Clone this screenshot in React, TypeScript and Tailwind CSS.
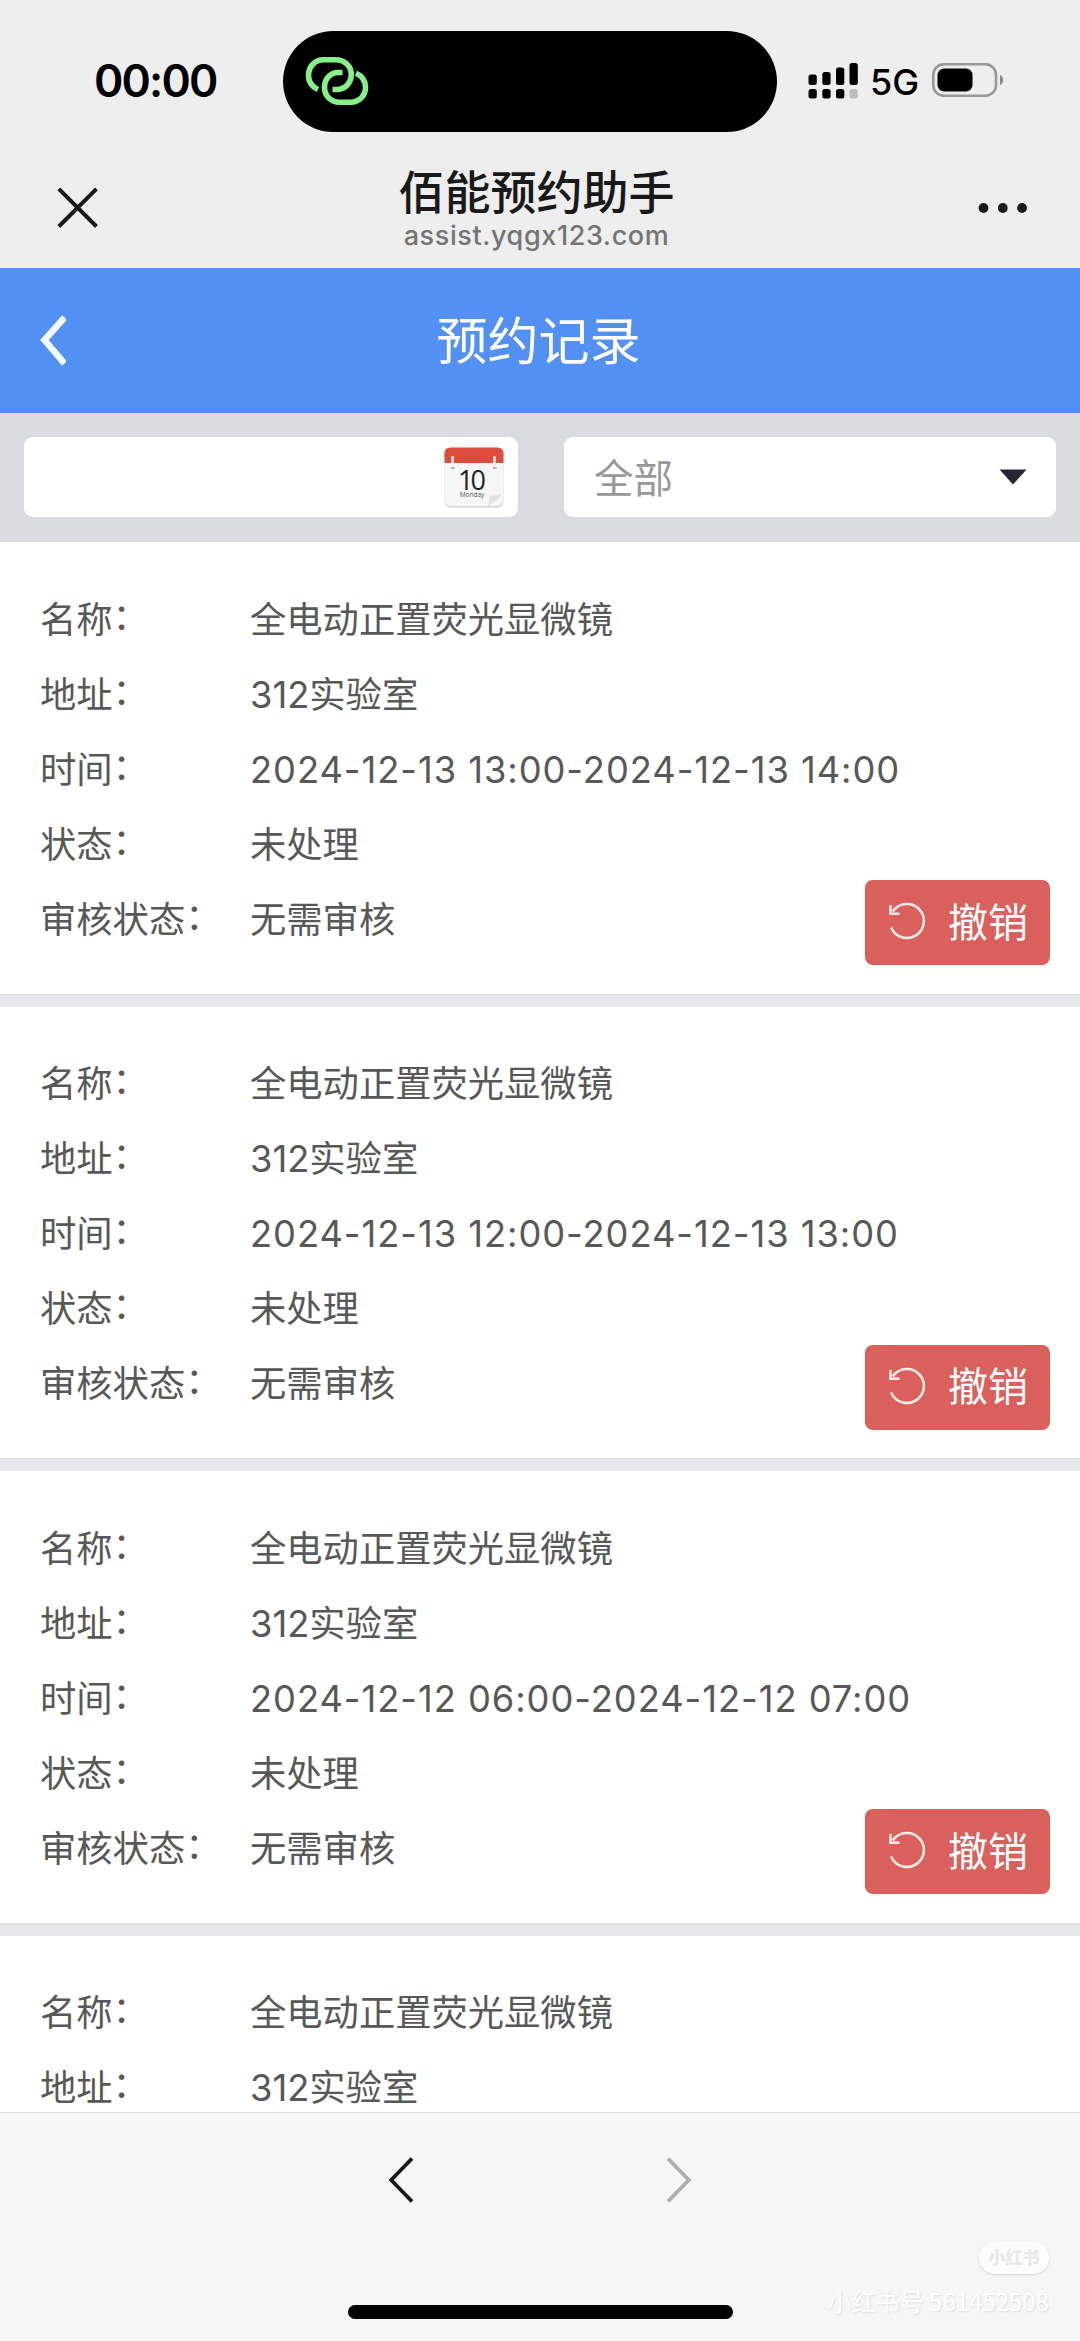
import React from 'react';

const records = [
  { id: 1, time: '2024-12-13 13:00-2024-12-13 14:00' },
  { id: 2, time: '2024-12-13 12:00-2024-12-13 13:00' },
  { id: 3, time: '2024-12-12 06:00-2024-12-12 07:00' },
  { id: 4 },
];

function StatusBar() {
  return (
    <div className="flex h-[162px] shrink-0 items-center">
      <div className="w-[283px] pl-[94px] text-[44.500px] leading-none font-semibold tracking-[-1.800px] text-black">00:00</div>
      <div className="flex h-[101px] w-[494px] items-center rounded-full bg-black pl-[21px]">
        {/* Personal hotspot links */}
        <svg width="66" height="52" viewBox="0 0 66 52" fill="none" stroke="#86f089" strokeWidth="5.6">
          <path d="M14 34.500C7.500 31.500 4.500 26.500 4.500 20.500C4.500 11.500 11 4.800 19.500 4.800H31.500C40.500 4.800 47.300 11 47.300 19.500C47.300 28 41 34.500 32.500 34.500H28.500" />
          <path d="M38.500 17.500H34.500C26 17.500 20.500 24 20.500 32.500C20.500 41 27 47.200 35.500 47.200H46.500C55 47.200 61.500 41 61.500 32.500C61.500 26 58 20.800 52 18.200" />
        </svg>
      </div>
      <svg className="ml-[31px]" width="52" height="38" viewBox="0 0 52 38" fill="#000">
        <rect x="0.500" y="12.500" width="8.300" height="10.500" rx="2.500" />
        <rect x="14.300" y="10" width="8.300" height="13" rx="2.500" />
        <rect x="28" y="5.500" width="8.300" height="17.500" rx="2.500" />
        <rect x="41.500" y="1" width="8.300" height="22" rx="2.500" />
        <rect x="0.500" y="27" width="8.300" height="9.500" rx="2.500" />
        <rect x="14.300" y="27" width="8.300" height="9.500" rx="2.500" />
        <rect x="28" y="27" width="8.300" height="9.500" rx="2.500" />
        <rect x="41.500" y="27" width="8.300" height="9.500" rx="2.500" fill="#bdbdbd" />
      </svg>
      <div className="ml-[10px] pt-px text-[36px] leading-none font-medium text-black">5G</div>
      <svg className="-mt-[2px] ml-3" width="74" height="36" viewBox="0 0 74 36">
        <rect x="2.300" y="2.300" width="62.700" height="31.400" rx="10.500" fill="none" stroke="#989898" strokeWidth="2.600" />
        <rect x="6.500" y="6.500" width="35" height="23" rx="6.500" fill="#000" />
        <path d="M69 13C73.300 14.800 73.300 21.200 69 23Z" fill="#8b8b8b" />
      </svg>
    </div>
  );
}

function BrowserBar() {
  return (
    <div className="flex h-[106px] shrink-0 items-start justify-between pr-[52px] pl-[57px]">
      <svg className="mt-[25px]" width="42" height="42" viewBox="0 0 42 42" stroke="#191919" strokeWidth="4">
        <path d="M1.800 1.800L39.500 39.500M39.500 1.800L1.800 39.500" />
      </svg>
      <div className="mr-1 flex flex-col items-center">
        <div className="text-[46px] leading-[60px] font-medium text-[#191919]">佰能预约助手</div>
        <div className="text-[27px] leading-[27px] font-medium tracking-[0.600px] text-[#757575]">assist.yqgx123.com</div>
      </div>
      <svg className="mt-[40px]" width="50" height="12" viewBox="0 0 50 12" fill="#191919">
        <circle cx="5.500" cy="6" r="4.900" />
        <circle cx="24.800" cy="6" r="4.900" />
        <circle cx="44" cy="6" r="4.900" />
      </svg>
    </div>
  );
}

function PageHeader() {
  return (
    <div className="flex h-[145px] shrink-0 items-center bg-[#5290f3] px-10 text-white">
      <svg width="26" height="51" viewBox="0 0 26 51" fill="none" stroke="#f3faff" strokeWidth="6.500">
        <path d="M24.500 2.500L4.500 25L24.500 48.500" />
      </svg>
      <h1 className="flex-1 pt-[2px] pr-[29px] text-center text-[51px] leading-none font-normal">预约记录</h1>
    </div>
  );
}

function CalendarIcon() {
  return (
    <svg width="60" height="61" viewBox="0 0 60 61">
      <rect x="0.500" y="1.500" width="59" height="59" rx="6" fill="#d3d4d5" />
      <rect x="0.500" y="0.500" width="59" height="58.500" rx="6" fill="#f5f6f6" />
      <path d="M0.500 16V6.500Q0.500 0.500 6.500 0.500H53.500Q59.500 0.500 59.500 6.500V16Z" fill="#dc4c3c" />
      <path d="M8.500 9V18M50.500 9V18" stroke="#f6e9e8" strokeWidth="2.500" />
      <path d="M7 21H10.500M49 21H52.500" stroke="#999" strokeWidth="1.500" />
      <path d="M44 58.500C45.500 54 44.500 51 46 49C49 48 54 49.500 57.500 46C56 51 50 56.500 44 58.500Z" fill="#e1e2e3" />
      <text x="26.500" y="43" textAnchor="middle" fontFamily="Open Sans, sans-serif" fontSize="27" letterSpacing="-3" fill="#222">10</text>
      <text x="28" y="50" textAnchor="middle" fontFamily="Open Sans, sans-serif" fontSize="6.500" fill="#555">Monday</text>
    </svg>
  );
}

function Filters() {
  return (
    <div className="flex h-[129px] shrink-0 gap-[46px] bg-[#d9dbde] px-6 pt-6">
      <div className="flex h-[80px] w-[494px] items-center justify-end rounded-[9px] bg-white pr-[14px]">
        <CalendarIcon />
      </div>
      <div className="flex h-[80px] flex-1 items-center justify-between rounded-[9px] bg-white pr-[29px] pl-[30px]">
        <span className="pt-[5px] text-[39.500px] leading-none text-[#999]">全部</span>
        <svg width="28" height="16" viewBox="0 0 28 16" fill="#252535">
          <path d="M0.500 0.500H27.500L14 15.500Z" />
        </svg>
      </div>
    </div>
  );
}

function Row({ label, value, wide }: { label: string; value: string; wide?: boolean }) {
  return (
    <div className="flex h-[75px] items-center whitespace-nowrap">
      <dt className="w-[210px] shrink-0">
        {label}
        <span className="relative -top-[3px]">：</span>
      </dt>
      <dd className={wide ? 'tracking-[0.950px]' : ''}>{value}</dd>
    </div>
  );
}

function RecordCard({ time }: { time?: string }) {
  return (
    <div className="h-[464.500px] shrink-0">
      <div className="flex h-[451.500px] items-start justify-between bg-white pt-[40.500px] pr-[30px] pl-10">
        <dl className="w-[820px] shrink-0 text-[36.300px] leading-none text-[#585858]">
          <Row label="名称" value="全电动正置荧光显微镜" />
          <Row label="地址" value="312实验室" />
          {time && (
            <>
              <Row label="时间" value={time} wide />
              <Row label="状态" value="未处理" />
              <Row label="审核状态" value="无需审核" />
            </>
          )}
        </dl>
        {time && (
          <button className="mb-[28.500px] flex h-[85px] w-[185px] shrink-0 items-center self-end rounded-[8px] bg-[#d9605b] pl-[23px] text-white">
            <svg className="-mt-[5px]" width="40" height="40" viewBox="0 0 40 40" fill="none" stroke="#fde8e6" strokeWidth="2.600">
              <path d="M3.200 27.500A17 17 0 1 0 4.800 11.500M2.500 5V13.700H11.500" />
            </svg>
            <span className="ml-[20px] text-[40px] leading-none">撤销</span>
          </button>
        )}
      </div>
      <div className="h-[13px] border-t-2 border-[#e0e1e2] bg-[#e7e8e9]" />
    </div>
  );
}

function BottomBar() {
  return (
    <div className="relative flex h-[229px] shrink-0 flex-col items-center justify-between border-t border-[#dfdfdf] bg-[#f6f6f6] pt-[43px] pb-[22px]">
      <div className="flex w-[304px] justify-between">
        <svg width="26" height="48" viewBox="0 0 26 48" fill="none" stroke="#191919" strokeWidth="3.800">
          <path d="M24 2.500L3.200 24L24 45.500" />
        </svg>
        <svg width="26" height="48" viewBox="0 0 26 48" fill="none" stroke="#aeaeae" strokeWidth="3.800">
          <path d="M2 2.500L22.800 24L2 45.500" />
        </svg>
      </div>
      <div className="h-[14px] w-[385px] rounded-full bg-black" />
      {/* Watermark */}
      <div className="absolute right-[31px] bottom-[26px] flex flex-col items-end">
        <div className="flex h-[32px] w-[70px] items-center justify-center rounded-full bg-[#fcfcfc] text-[17px] leading-none font-black text-[#e9e9e9] shadow-sm">小红书</div>
        <div className="mt-[13px] font-['Noto_Sans_CJK_SC',sans-serif] text-[24px] leading-[28px] whitespace-nowrap text-[#fefefe] [text-shadow:1px_1px_2px_#dedede]">小红书号 561452508</div>
      </div>
    </div>
  );
}

export default function App() {
  return (
    <div className="flex h-[2341px] w-[1080px] flex-col overflow-hidden bg-[#eeeeee] font-['Inter','Noto_Sans_CJK_SC',sans-serif]">
      <StatusBar />
      <BrowserBar />
      <PageHeader />
      <Filters />
      <div className="flex min-h-0 flex-1 flex-col overflow-hidden bg-white">
        {records.map((record) => (
          <RecordCard key={record.id} time={record.time} />
        ))}
      </div>
      <BottomBar />
    </div>
  );
}
